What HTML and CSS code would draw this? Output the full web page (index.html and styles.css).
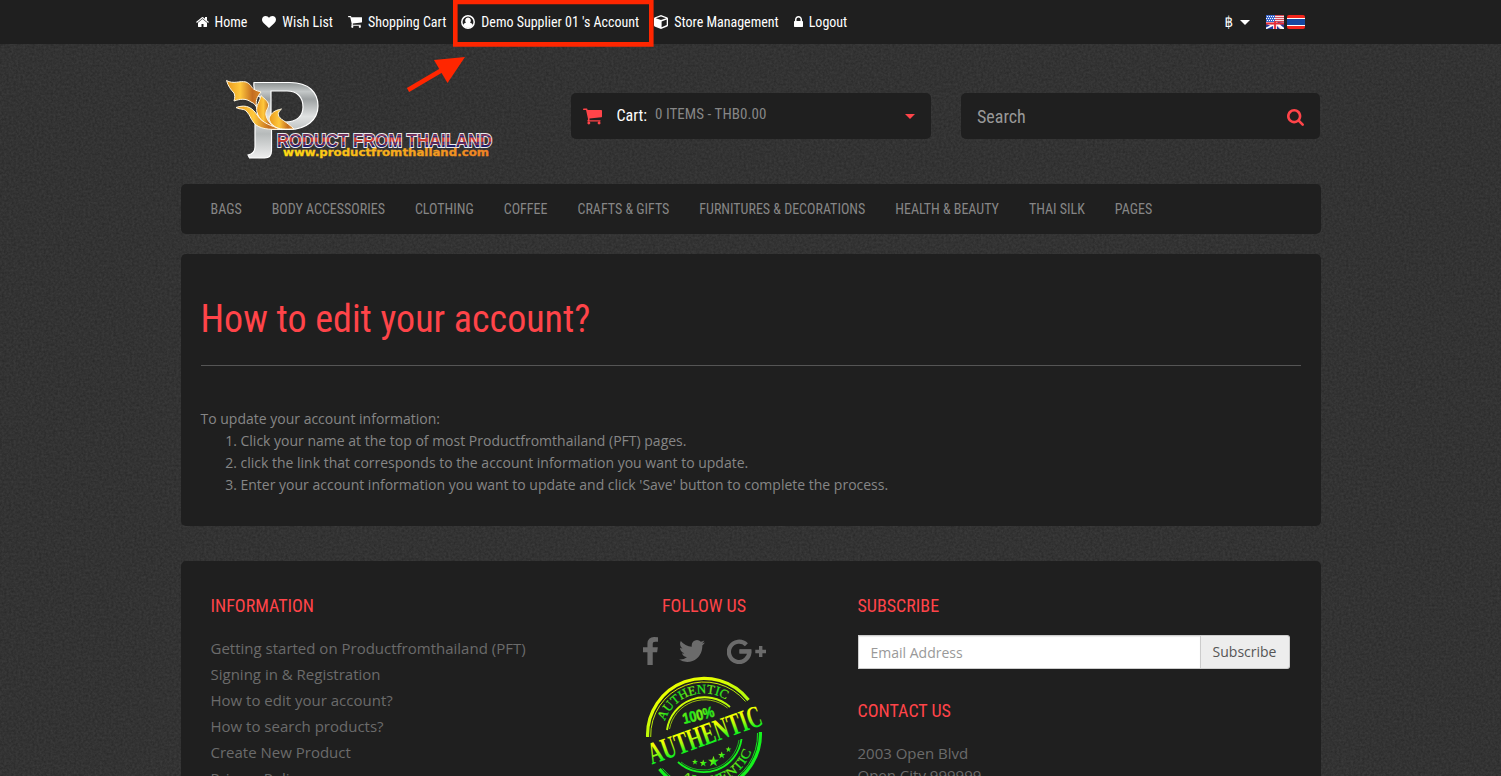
FILE: index.html
```html
<!DOCTYPE html>
<html lang="en">
<head>
<meta charset="utf-8">
<title>How to edit your account?</title>
<link rel="stylesheet" href="styles.css">
</head>
<body>
<svg class="texture" width="1501" height="776" aria-hidden="true">
  <filter id="grain" x="0" y="0" width="100%" height="100%" color-interpolation-filters="sRGB">
    <feTurbulence type="fractalNoise" baseFrequency="0.43" numOctaves="3" seed="8"/>
    <feColorMatrix values="0.09 0 0 0 0.155  0.09 0 0 0 0.155  0.09 0 0 0 0.155  0 0 0 0 1"/>
  </filter>
  <rect width="1501" height="776" filter="url(#grain)"/>
</svg>
<svg class="defs" width="0" height="0" aria-hidden="true">
  <symbol id="cart" viewBox="64 256 1664 1408"><path d="M704 1536q0 52-38 90t-90 38-90-38-38-90 38-90 90-38 90 38 38 90zm896 0q0 52-38 90t-90 38-90-38-38-90 38-90 90-38 90 38 38 90zm128-1088v512q0 24-16.5 42.5t-40.5 21.5l-1044 122q13 60 13 70 0 16-24 64h920q26 0 45 19t19 45-19 45-45 19h-1024q-26 0-45-19t-19-45q0-11 8-31.5t16-36 21.5-40 15.5-29.5l-177-823h-204q-26 0-45-19t-19-45 19-45 45-19h256q16 0 28.5 6.5t19.5 15.5 13 24.5 8 26 5.5 29.5 4.5 26h1201q26 0 45 19t19 45z"/></symbol>
  <symbol id="star" viewBox="-10 -10 20 20"><path d="M0-10l2.400 6.700 7.100.2-5.600 4.400 2 6.800L0 4.100l-5.900 4 2-6.800-5.600-4.400 7.100-.2z"/></symbol>
</svg>
<header class="topbar">
  <div class="container topbar-row">
    <nav class="links">
      <a><svg width="13" height="14" viewBox="64 0 1664 1792"><path d="M1472 992v480q0 26-19 45t-45 19h-384v-384h-256v384h-384q-26 0-45-19t-19-45v-480q0-1 .5-3t.5-3l575-474 575 474q1 2 1 6zm223-69l-62 74q-8 9-21 11h-3q-13 0-21-7l-692-577-692 577q-12 8-24 7-13-2-21-11l-62-74q-8-10-7-23.5t11-21.5l719-599q32-26 76-26t76 26l244 204v-195q0-14 9-23t23-9h192q14 0 23 9t9 23v408l219 182q10 8 11 21.5t-7 23.5z"/></svg><span>Home</span></a>
      <a><svg width="14" height="14" viewBox="0 0 1792 1792"><path d="M896 1664q-26 0-44-18l-624-602q-10-8-27.5-26t-55.500-65.500-68-97.500-53.500-121-23.500-138q0-220 127-344t351-124q62 0 126.500 21.500t120 58 95.500 68.500 76 68q36-36 76-68t95.500-68.500 120-58 126.500-21.500q224 0 351 124t127 344q0 221-229 450l-623 600q-18 18-44 18z"/></svg><span>Wish List</span></a>
      <a><svg width="14" height="12"><use href="#cart"/></svg><span>Shopping Cart</span></a>
      <a><svg width="14" height="14" viewBox="0 0 14 14"><circle cx="7" cy="7" r="6.200" fill="none" stroke="#fff" stroke-width="1.500"/><path d="M7 2.600a2.900 2.900 0 0 1 2 5c1.500.4 2.300 1.200 2.700 2.400A5.600 5.600 0 0 1 7 13a5.600 5.600 0 0 1-4.700-3C2.700 8.800 3.500 8 5 7.600a2.900 2.900 0 0 1 2-5z"/></svg><span>Demo Supplier 01 's Account</span></a>
      <a><svg width="14" height="14" viewBox="0 0 14 14"><path fill-rule="evenodd" d="M7 0l6.500 2.500.5.900v7.100l-.6.900L7 14 .6 11.400 0 10.500V3.400l.5-.9zM7 1.400L1.900 3.200 7 5.100l5.100-1.900zM7.600 12.300l5.100-2.200V4.500L7.600 6.400z"/></svg><span>Store Management</span></a>
      <a><svg width="9" height="14" viewBox="320 0 1152 1792"><path d="M640 768h512v-192q0-106-75-181t-181-75-181 75-75 181v192zm832 96v576q0 40-28 68t-68 28h-960q-40 0-68-28t-28-68v-576q0-40 28-68t68-28h32v-192q0-184 132-316t316-132 316 132 132 316v192h32q40 0 68 28t28 68z"/></svg><span>Logout</span></a>
    </nav>
    <div class="locale">
      <span class="baht">฿</span><i class="caret"></i>
      <svg class="flag" width="18" height="14" viewBox="0 0 18 14"><path fill="#f6dfe2" d="M0 0h18v14H0z"/><path fill="#3e68ca" d="M0 0h9v7H0z"/><path stroke="#fff" stroke-dasharray="1 1" d="M1 1.500h8M0 3.500h9M1 5.500h8"/><path stroke="#d34a56" d="M9 .5h9M9 2.500h9M9 4.500h9M9 6.500h9"/><path fill="#26399b" d="M0 8h4l3 3v3H0zM11 7l7 6V7zM11 11l3 3h-3z"/><path d="M0 8l6 2.500-6 3M18 14l-7-5 7-1" stroke="#fff" stroke-width="1.600" fill="none"/><path d="M9 6v8M0 8.500h18" stroke="#e52b35" stroke-width="1.800"/></svg>
      <svg class="flag th" width="18" height="14" viewBox="0 0 18 14"><rect width="18" height="14" rx="2" fill="#f0251c"/><path fill="#fff" d="M0 3h18v8H0z"/><path fill="#1447a0" d="M0 4h18v6H0z"/></svg>
    </div>
  </div>
</header>
<div class="container masthead">
  <svg class="logo" width="276" height="86" viewBox="222 76 276 86">
    <defs>
      <linearGradient id="steel" x1="0" y1="0" x2="0" y2="1"><stop offset="0" stop-color="#8d9292"/><stop offset=".12" stop-color="#c4c8c8"/><stop offset=".22" stop-color="#9ca0a1"/><stop offset=".45" stop-color="#e0e2e2"/><stop offset=".68" stop-color="#b6baba"/><stop offset="1" stop-color="#eee"/></linearGradient>
      <linearGradient id="flame"><stop offset="0" stop-color="#e9981c"/><stop offset=".4" stop-color="#ffc83c"/><stop offset=".75" stop-color="#c46d20"/><stop offset="1" stop-color="#d98a28"/></linearGradient>
      <linearGradient id="stripe" gradientUnits="userSpaceOnUse" x1="0" y1="132" x2="0" y2="147"><stop offset="0" stop-color="#1d1a6d"/><stop offset=".14" stop-color="#28236d"/><stop offset=".2" stop-color="#b8404a"/><stop offset=".3" stop-color="#2c2e78"/><stop offset=".42" stop-color="#d43d35"/><stop offset=".62" stop-color="#c63c2c"/><stop offset=".72" stop-color="#2c2675"/><stop offset=".82" stop-color="#a03040"/><stop offset=".9" stop-color="#211f6d"/></linearGradient>
      <linearGradient id="gold"><stop offset="0" stop-color="#ffdc13"/><stop offset="1" stop-color="#ef8224"/></linearGradient>
    </defs>
    <path fill="url(#steel)" stroke="#fff" stroke-width="1.200" fill-rule="evenodd" d="M255.300 82.500H291c19 0 28 10 28 23.500 0 14-12 23.500-29 23.500h-17.500v21c0 5-2 7.500-7 7.500h-15l-1.500-3c4.500-1 7-4 7-8V122l7-24c-5-1-9-7-8-15.500zM272 91v31h14c12 0 18-6 18-15 0-10-6-16-16-16z"/>
    <g fill="url(#flame)" stroke="#fff8e4" stroke-width="1">
      <path d="M227.500 80.500c7 4 13 0 19.500 1.500 5 2 5 5 7.500 7 3 2 5 2 7.500 3-4 5-6 9-4 17-1-4-3-6-6-7-5-4-11-3-17-1 1-4 1-5 0-8-3-3-6-7-7.500-12.500z"/>
      <path d="M262 95.500c4 4 8 6 7.500 10.500-1 4-4 6-2 11 1 4 4 6 7 10.500-8-3-15-8-16.700-16-1-6 3-10 4.200-16z"/>
      <path d="M237 107.500c11-4 17 1 21.500 8 5 8 14 10 22.500 13.500-10 1-21 0-26-6-4-5-4-8-7-11-3-4-7-2-11-4.500z"/>
      <path d="M282.500 109c-5 4-4 8 2 11.500 4 3 7 5 10.500 8.500-8 0-15 1-20-3-4-3-6-7-4-10 3-5 7-6 11.500-7z"/>
    </g>
    <text x="278" y="146.500" class="brand" textLength="215" lengthAdjust="spacingAndGlyphs">RODUCT FROM THAILAND</text>
    <text x="284" y="156" class="domain" textLength="206" lengthAdjust="spacingAndGlyphs">www.productfromthailand.com</text>
  </svg>
  <div class="cart-box"><svg width="19" height="17"><use href="#cart"/></svg><span class="cart-label">Cart:</span><span class="cart-total">0 ITEMS - THB0.00</span><i class="caret"></i></div>
  <div class="search-box"><span>Search</span><svg width="17" height="17" viewBox="64 128 1664 1664"><path d="M1216 832q0-185-131.500-316.500t-316.500-131.500-316.500 131.500-131.500 316.500 131.500 316.500 316.500 131.500 316.500-131.500 131.500-316.500zm512 832q0 52-38 90t-90 38q-54 0-90-38l-343-342q-179 124-399 124-143 0-273.500-55.500t-225-150-150-225-55.500-273.500 55.500-273.500 150-225 225-150 273.500-55.500 273.500 55.500 225 150 150 225 55.500 273.500q0 220-124 399l343 343q37 37 37 90z"/></svg></div>
</div>
<nav class="container menu"><a>BAGS</a><a>BODY ACCESSORIES</a><a>CLOTHING</a><a>COFFEE</a><a>CRAFTS &amp; GIFTS</a><a>FURNITURES &amp; DECORATIONS</a><a>HEALTH &amp; BEAUTY</a><a>THAI SILK</a><a>PAGES</a></nav>
<main class="container article">
  <h1>How to edit your account?</h1>
  <p>To update your account information:</p>
  <ol>
    <li>Click your name at the top of most Productfromthailand (PFT) pages.</li>
    <li>click the link that corresponds to the account information you want to update.</li>
    <li>Enter your account information you want to update and click 'Save' button to complete the process.</li>
  </ol>
</main>
<footer class="container footer">
  <section class="info">
    <h2>INFORMATION</h2>
    <ul><li>Getting started on Productfromthailand (PFT)</li><li>Signing in &amp; Registration</li><li>How to edit your account?</li><li>How to search products?</li><li>Create New Product</li><li>Privacy Policy</li></ul>
  </section>
  <section class="follow">
    <h2>FOLLOW US</h2>
    <div class="social">
      <svg width="15" height="28" viewBox="479 0 864 1664" preserveAspectRatio="none"><path d="M1343 12v264h-157q-86 0-116 36t-30 108v189h293l-39 296h-254v759h-306v-759h-255v-296h255v-218q0-186 104-288.500t277-102.500q147 0 228 12z"/></svg>
      <svg width="26" height="22" viewBox="108 256 1576 1280" preserveAspectRatio="none"><path d="M1684 408q-67 98-162 167 1 14 1 42 0 130-38 259.500t-115.500 248.500-184.500 210.500-258 146-323 54.500q-271 0-496-145 35 4 78 4 225 0 401-138-105-2-188-64.500t-114-159.500q33 5 61 5 43 0 85-11-112-23-185.500-111.500t-73.500-205.500v-4q68 38 146 41-66-44-105-115t-39-154q0-88 44-163 121 149 294.500 238.500t371.500 99.500q-8-38-8-74 0-134 94.500-228.500t228.500-94.500q140 0 236 102 109-21 205-78-37 115-142 178 93-10 186-50z"/></svg>
      <svg width="39" height="25" viewBox="0 0 39 25"><path fill="none" stroke="#6b6b6b" stroke-width="4.200" d="M19.400 5.700A10.200 10.200 0 1 0 22.300 12.400H12.500"/><path d="M12.500 10.400h11.800v4H12.500zM32 7h3.400v3.800H39v3.400h-3.600V18H32v-3.800h-3.700v-3.400H32z"/></svg>
    </div>
    <svg class="stamp" width="120" height="120" viewBox="644 676 120 120">
      <defs>
        <linearGradient id="acid" gradientUnits="userSpaceOnUse" x1="690" y1="685" x2="725" y2="760"><stop offset="0" stop-color="#e8ff00"/><stop offset=".45" stop-color="#b0f90c"/><stop offset=".8" stop-color="#14f31c"/></linearGradient>
        <linearGradient id="leaf" gradientUnits="userSpaceOnUse" x1="660" y1="690" x2="668" y2="694" spreadMethod="reflect"><stop offset="0" stop-color="#14e81c"/><stop offset="1" stop-color="#7cf010"/></linearGradient>
        <linearGradient id="word" gradientUnits="userSpaceOnUse" x1="0" y1="-17" x2="0" y2="-1"><stop offset="0" stop-color="#f0ff00"/><stop offset=".5" stop-color="#a0f80c"/><stop offset="1" stop-color="#14f31c"/></linearGradient>
        <path id="arcTop" d="M664.900 721A41.500 41.500 0 0 1 728 701"/>
        <path id="arcBottom" d="M680.500 779A50 50 0 0 0 753 745"/>
      </defs>
      <g fill="none" stroke="url(#acid)">
        <path stroke-width="3.200" d="M647.600 737A56.500 56.500 0 0 1 748.500 700M760.400 732A56.500 56.500 0 0 1 659.500 769"/>
        <path stroke-width=".9" d="M650.700 737A53.500 53.500 0 0 1 745.500 701.500M757.500 733A53.500 53.500 0 0 1 662.500 768.500"/>
        <path stroke-width="1.900" d="M667 730A38 38 0 0 1 730 707M741.500 739A38 38 0 0 1 678 762"/>
        <path stroke-width=".7" d="M669.500 729A35.800 35.800 0 0 1 727.500 708M739 740A35.800 35.800 0 0 1 681 762"/>
      </g>
      <g class="stamp-text">
        <text font-size="13"><textPath href="#arcTop" textLength="74" lengthAdjust="spacingAndGlyphs">AUTHENTIC</textPath></text>
        <text font-size="13"><textPath href="#arcBottom" textLength="86" lengthAdjust="spacingAndGlyphs">AUTHENTIC</textPath></text>
        <text class="percent" transform="translate(684 724) rotate(-14)" textLength="32" lengthAdjust="spacingAndGlyphs">100%</text>
        <text class="word" transform="translate(652 764.500) rotate(-19.700)" textLength="119" lengthAdjust="spacingAndGlyphs">AUTHENTIC</text>
        <use href="#star" x="692" y="759" width="6" height="6"/><use href="#star" x="699.500" y="759.500" width="7.500" height="7.500"/><use href="#star" x="708" y="756" width="11" height="11"/><use href="#star" x="718" y="751.500" width="7.500" height="7.500"/><use href="#star" x="725.500" y="746.500" width="6" height="6"/>
      </g>
    </svg>
  </section>
  <section class="contact">
    <h2>SUBSCRIBE</h2>
    <div class="subscribe"><span class="field">Email Address</span><span class="button">Subscribe</span></div>
    <h2>CONTACT US</h2>
    <address>2003 Open Blvd<br>Open City 999999</address>
  </section>
</footer>
<svg class="callout" width="260" height="96" viewBox="400 0 260 96" aria-hidden="true"><path fill="none" stroke="#ff2600" stroke-width="4.600" d="M455.300 2h196v42.400h-196z"/><path stroke="#ff2600" stroke-width="4.600" d="M408 90l34-20"/><path fill="#ff2600" d="M465 57l-31 3 13.500 23z"/></svg>
</body>
</html>
```
FILE: styles.css
```css
* { box-sizing: border-box; }
html { height: 100%; overflow: hidden; }
body { margin: 0; height: 776px; overflow: hidden; position: relative; background: #333; font-family: "Open Sans", sans-serif; font-size: 14px; line-height: 22px; color: #868686; }
.texture { position: absolute; top: 0; left: 0; z-index: -1; }
.defs { position: absolute; }
.container { width: 1140px; margin: 0 auto; }
.topbar, .masthead div, .menu, h1, h2 { font-family: "Roboto Condensed", Roboto, sans-serif; font-stretch: 75%; font-weight: 400; }
.topbar { height: 44px; background: #1f1f1f; color: #fff; }
.topbar-row { height: 44px; padding: 0 15.500px 0 15px; display: flex; justify-content: space-between; align-items: center; }
.links { display: flex; gap: 15px; }
.links a { display: flex; align-items: center; gap: 6px; white-space: nowrap; }
.links svg { fill: #fff; flex: none; }
.locale { display: flex; align-items: center; }
.baht { font-family: "Roboto", "DejaVu Sans", sans-serif; font-size: 15px; margin-right: 7px; }
.caret { border: 5px solid transparent; border-top-color: currentColor; border-bottom: 0; }
.flag { margin-left: 16px; }
.flag.th { margin-left: 3px; }
.masthead { height: 140px; display: flex; align-items: flex-start; }
.logo { margin: 32px 73px 0 40.500px; flex: none; overflow: visible; }
.brand { font: bold 18.500px "Liberation Sans", sans-serif; fill: url(#stripe); stroke: #eee; stroke-width: 1.800; paint-order: stroke; }
.domain { font: bold 10.500px "DejaVu Sans", sans-serif; fill: url(#gold); stroke: url(#gold); stroke-width: .3; }
.cart-box, .search-box { height: 46px; margin-top: 49px; background: #1f1f1f; border-radius: 5px; display: flex; align-items: center; }
.cart-box { width: 360px; margin-left: .5px; padding: 0 16px 0 12.500px; }
.cart-box svg, .search-box svg { fill: #ff4449; }
.cart-label { font-size: 16px; color: #fff; margin-left: 14.500px; }
.cart-total { margin: -4px auto 0 8px; font-size: 15px; letter-spacing: .05px; }
.cart-box .caret { color: #ff4449; }
.search-box { width: 359px; margin-left: 30px; padding: 2px 15.500px 0 16.500px; justify-content: space-between; font-size: 18px; color: #999; }
.menu { height: 50px; background: #1f1f1f; border-radius: 5px; display: flex; align-items: center; gap: 30px; padding: 0 30px; }
.menu a { white-space: nowrap; }
.article { margin-top: 20px; height: 272px; padding: 44px 20px 0; background: #1f1f1f; border-radius: 5px; }
h1 { margin: 0 0 42px; height: 68px; border-bottom: 1px solid #555; font-size: 38px; line-height: 43px; color: #ff4449; }
p { margin: 0; }
ol { margin: 0; padding-left: 40px; }
.footer { margin-top: 35px; height: 230px; overflow: hidden; padding: 35px 30px 0; background: #1f1f1f; border-radius: 5px 5px 0 0; display: flex; font-size: 15px; color: #6b6b6b; }
h2 { margin: 0; font-size: 18px; line-height: 20px; color: #ff4449; }
.info { width: 432px; }
ul { list-style: none; padding: 0; margin: 19px 0 0; line-height: 26px; }
.follow { width: 123px; display: flex; flex-direction: column; align-items: center; }
.social { display: flex; width: 123px; height: 28px; margin: 21px 0 11px; align-items: center; justify-content: space-between; fill: #6b6b6b; }
.stamp { flex: none; overflow: visible; }
.stamp-text { fill: url(#leaf); stroke: url(#leaf); stroke-width: .2; font-family: "Liberation Serif", serif; }
.percent { font: bold 15px "Liberation Sans", sans-serif; stroke-width: .5; }
.word { font-size: 31px; font-weight: bold; fill: url(#word); stroke: none; }
.contact { width: 432px; margin-left: 92px; }
.subscribe { display: flex; height: 34px; margin: 19px 0 32px; font-size: 14px; line-height: 32px; }
.field { width: 343px; padding: 1px 12px; background: #fff; border: 1px solid #ccc; color: #999; box-shadow: inset 0 1px 1px rgba(0,0,0,.08); }
.button { width: 89px; background: #ededed; border: 1px solid #ccc; border-left: 0; border-radius: 0 3px 3px 0; color: #555; text-align: center; }
address { margin-top: 21px; font-style: normal; }
.callout { position: absolute; left: 400px; top: 0; }
```
